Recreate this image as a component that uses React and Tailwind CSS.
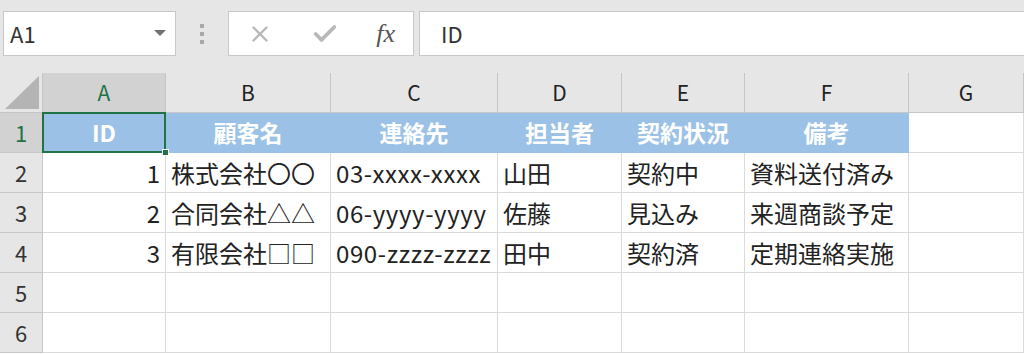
import { X, Check } from "lucide-react";

const cols = ["A", "B", "C", "D", "E", "F", "G"];
const widths = ["w-[123px]", "w-[165px]", "w-[167px]", "w-[124px]", "w-[123px]", "w-[164px]", "flex-1"];

const header = ["ID", "顧客名", "連絡先", "担当者", "契約状況", "備考"];
const rows = [
  ["1", "株式会社〇〇", "03-xxxx-xxxx", "山田", "契約中", "資料送付済み"],
  ["2", "合同会社△△", "06-yyyy-yyyy", "佐藤", "見込み", "来週商談予定"],
  ["3", "有限会社□□", "090-zzzz-zzzz", "田中", "契約済", "定期連絡実施"],
];

const font = { fontFamily: '"Noto Sans CJK JP", "Noto Sans", sans-serif' };

const RowHead = ({ n, active }) => (
  <div
    className={
      "w-[43px] shrink-0 h-full flex items-center justify-center text-[22px] border-r border-b border-[#c6c6c6] " +
      (active ? "bg-[#d2d2d2] text-[#217346]" : "bg-[#e6e6e6] text-[#333]")
    }
  >
    {n}
  </div>
);

const App = () => {
  return (
    <div className="w-[1024px] h-[355px] bg-white overflow-hidden" style={font}>
      {/* formula bar */}
      <div className="h-[73px] bg-[#e6e6e6] flex items-start pt-[11px] pl-[3px]">
        <div className="w-[173px] h-[45px] bg-white border border-[#c8c8c8] flex items-center justify-between pl-[6px] pr-[9px]">
          <span className="text-[22px] text-[#333]">A1</span>
          <svg width="12" height="7" viewBox="0 0 12 7">
            <path d="M0 0 H12 L6 6 Z" fill="#707070" />
          </svg>
        </div>
        <div className="w-[52px] h-[45px] flex flex-col items-center justify-center gap-[4px]">
          <div className="w-[4px] h-[4px] bg-[#a8a8a8]" />
          <div className="w-[4px] h-[4px] bg-[#a8a8a8]" />
          <div className="w-[4px] h-[4px] bg-[#a8a8a8]" />
        </div>
        <div className="w-[186px] h-[45px] bg-white border border-[#c8c8c8] flex items-center justify-between pl-[18px] pr-[18px]">
          <X size={26} strokeWidth={2.2} color="#b8b8b8" />
          <Check size={28} strokeWidth={3.2} color="#b8b8b8" />
          <span className="text-[26px] italic text-[#555] leading-none" style={{ fontFamily: '"Liberation Serif", serif' }}>
            fx
          </span>
        </div>
        <div className="ml-[5px] flex-1 h-[45px] bg-white border border-[#c8c8c8] border-r-0 flex items-center pl-[21px]">
          <span className="text-[22px] text-[#333]">ID</span>
        </div>
      </div>

      {/* column headers */}
      <div className="h-[40px] flex bg-[#e6e6e6] border-b border-[#c6c6c6]">
        <div className="w-[43px] shrink-0 h-full border-r border-[#c6c6c6] flex items-end justify-end pr-[3px] pb-[3px]">
          <svg width="34" height="33" viewBox="0 0 34 33">
            <path d="M34 0 V33 H0 Z" fill="#b4b4b4" />
          </svg>
        </div>
        {cols.map((c, i) => (
          <div
            key={c}
            className={
              widths[i] +
              " shrink-0 h-full flex items-center justify-center text-[21px] border-r border-[#c6c6c6] " +
              (i === 0 ? "bg-[#d2d2d2] text-[#217346]" : "text-[#222]")
            }
          >
            {c}
          </div>
        ))}
      </div>

      {/* row 1 */}
      <div className="h-[40px] flex">
        <RowHead n="1" active />
        {cols.map((c, i) => (
          <div
            key={c}
            className={
              widths[i] +
              " shrink-0 h-full flex items-center justify-center text-[23px] font-bold text-white border-b border-r " +
              (i < 6 ? "bg-[#9bc2e6] border-[#9bc2e6]" : "bg-white border-[#dadada]") +
              (i === 0 ? " relative" : "")
            }
          >
            {header[i]}
            {i === 0 && (
              <>
                <div className="absolute -left-px -top-px -right-px -bottom-px border-2 border-[#217346]" />
                <div className="absolute -right-[4px] -bottom-[4px] w-[7px] h-[7px] bg-[#217346] border border-white" />
              </>
            )}
          </div>
        ))}
      </div>

      {/* data rows */}
      {rows.map((r, ri) => (
        <div key={ri} className="h-[40px] flex">
          <RowHead n={String(ri + 2)} />
          {cols.map((c, i) => (
            <div
              key={c}
              className={
                widths[i] +
                " shrink-0 h-full flex items-center text-[24px] text-[#222] border-b border-r border-[#dadada] whitespace-nowrap overflow-hidden " +
                (i === 0 ? "justify-end pr-[5px]" : "pl-[5px]") +
                (i === 2 ? " tracking-[0.6px]" : "")
              }
            >
              {r[i] || ""}
            </div>
          ))}
        </div>
      ))}

      {[5, 6].map((n) => (
        <div key={n} className="h-[40px] flex">
          <RowHead n={String(n)} />
          {cols.map((c, i) => (
            <div key={c} className={widths[i] + " shrink-0 h-full border-b border-r border-[#dadada]"} />
          ))}
        </div>
      ))}
    </div>
  );
};

export default App;
